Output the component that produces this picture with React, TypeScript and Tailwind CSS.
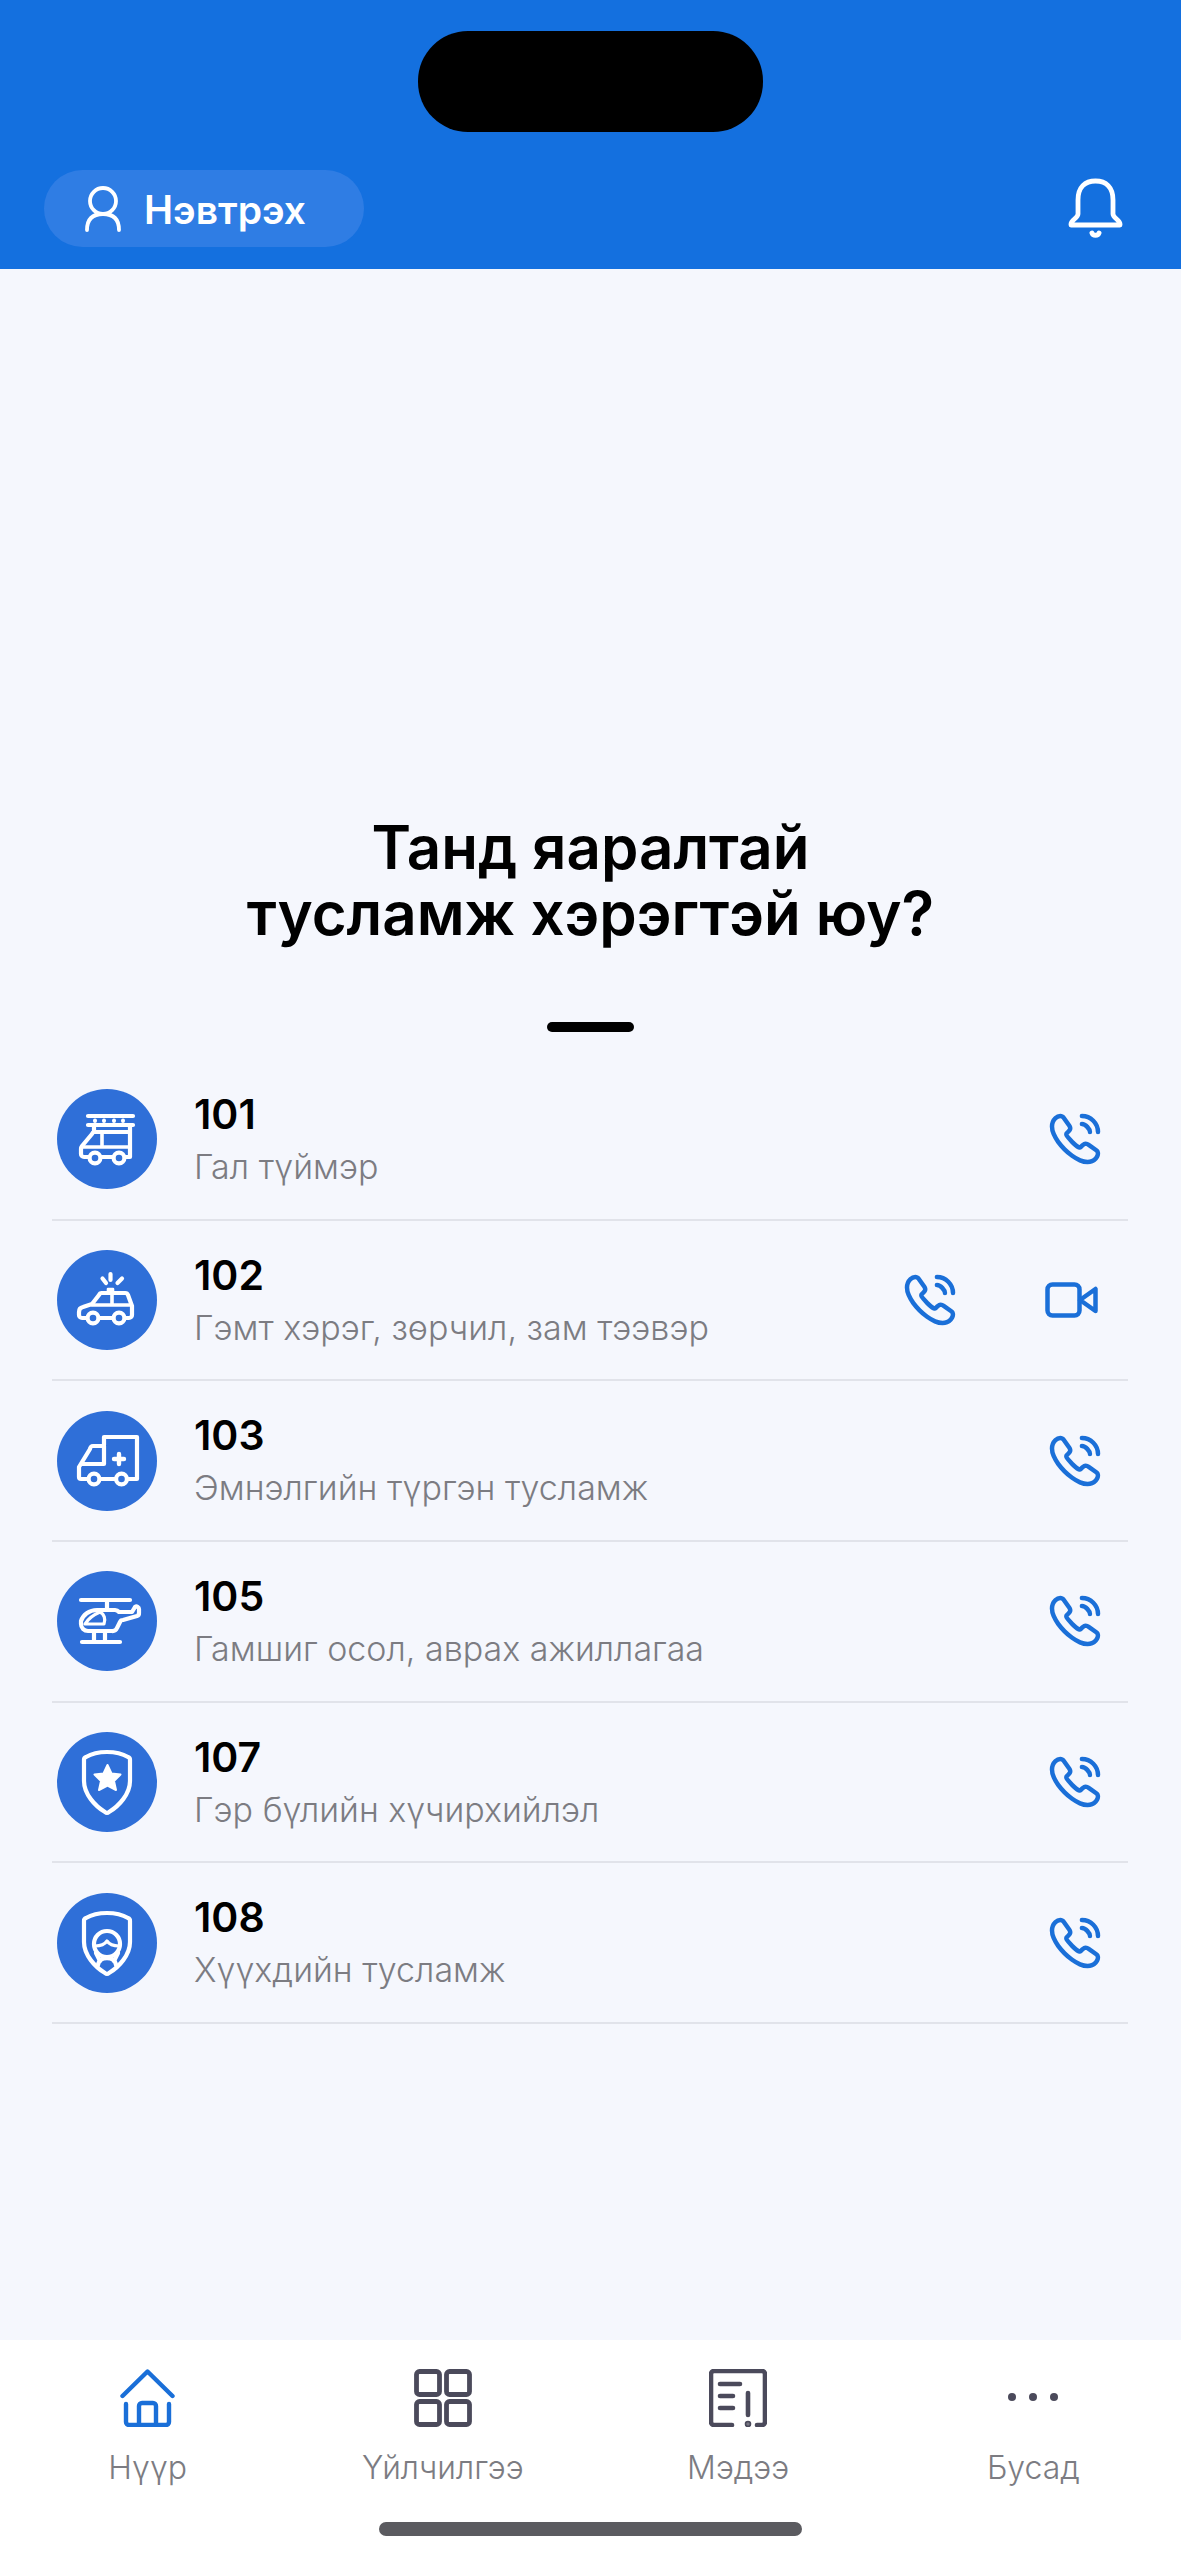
import React from 'react';

const PhoneIcon = () => (
  <svg width="46" height="46" viewBox="2 2 20 20" fill="none" stroke="#1a6fd8" strokeWidth="1.95" strokeLinecap="round" strokeLinejoin="round" overflow="visible">
    <path d="M21.97 18.33c0 .36-.08.73-.25 1.09-.17.36-.39.7-.68 1.02-.49.54-1.03.93-1.64 1.18-.6.25-1.25.38-1.95.38-1.02 0-2.11-.24-3.26-.73s-2.3-1.15-3.44-1.98a28.75 28.75 0 0 1-3.28-2.8 28.414 28.414 0 0 1-2.79-3.27c-.82-1.14-1.48-2.28-1.96-3.41C2.24 8.67 2 7.58 2 6.54c0-.68.12-1.33.36-1.93.24-.61.62-1.17 1.15-1.67C4.15 2.31 4.85 2 5.59 2c.28 0 .56.06.81.18.26.12.49.3.67.56l2.32 3.27c.18.25.31.48.4.7.09.21.14.42.14.61 0 .24-.07.48-.21.71-.13.23-.32.47-.56.71l-.76.79c-.11.11-.16.24-.16.4 0 .08.01.15.03.23.03.08.06.14.08.2.18.33.49.76.93 1.28.45.52.93 1.05 1.45 1.58.54.53 1.06 1.02 1.59 1.47.52.44.95.74 1.29.92.05.02.11.05.18.08.08.03.16.04.25.04.17 0 .3-.06.41-.17l.76-.75c.25-.25.49-.44.72-.56.23-.14.46-.21.71-.21.19 0 .39.04.61.13.22.09.45.22.7.39l3.31 2.35c.26.18.44.39.55.64.1.25.16.5.16.78Z" />
    <path d="M18.5 9c0-.6-.47-1.52-1.17-2.27-.64-.69-1.49-1.23-2.33-1.23" />
    <path d="M22 9c0-3.87-3.13-7-7-7" />
  </svg>
);

const VideoIcon = () => (
  <svg width="53" height="36" viewBox="0 0 53 36" fill="none" stroke="#1a6fd8" strokeWidth="4.5" strokeLinecap="round" strokeLinejoin="round">
    <rect x="2.5" y="2.5" width="32" height="31" rx="5" />
    <path d="M35 18 L50.5 7 V29 Z" />
  </svg>
);

// all service icons share a 100x100 box, same as the round badge
const TruckIcon = () => (
  <svg viewBox="0 0 100 100" className="w-full h-full" fill="none" stroke="#fff" strokeWidth="4.2" strokeLinecap="round" strokeLinejoin="round">
    <path d="M31 27 H76 M31 36 H76" />
    <path d="M38 31.5 V32 M47 31.5 V32 M57 31.5 V32 M66 31.5 V32" strokeWidth="4" />
    <path d="M37 37 V43 M73 37 V68 H68" />
    <path d="M32 68 H27 a3 3 0 0 1-3-3 V60 a5 5 0 0 1 1-3 L35 45 a3 3 0 0 1 2-2 H73" />
    <path d="M44 68 H56" />
    <path d="M25 58 H73 M45 44 V56" strokeWidth="3.6" />
    <circle cx="38" cy="69" r="5.4" />
    <circle cx="62" cy="69" r="5.4" />
  </svg>
);

const PoliceIcon = () => (
  <svg viewBox="0 0 100 100" className="w-full h-full" fill="none" stroke="#fff" strokeWidth="4.2" strokeLinecap="round" strokeLinejoin="round">
    <path d="M53.5 24 V30 M45.5 28.5 L49 33 M65 28.5 L60.5 33" />
    <path d="M51 42 V39 h5 V42 Z" fill="#fff" strokeWidth="2.6" />
    <path d="M30 68 H25 a3 3 0 0 1-3-3 V62 a5 5 0 0 1 4-5 L35 54 L42 45 a3 3 0 0 1 3-2 H68 a3 3 0 0 1 3 2 L75 56 V65 a3 3 0 0 1-3 3 H68" />
    <path d="M43 68 H55" />
    <path d="M35 55 H74 M55 44 V54" strokeWidth="3.6" />
    <circle cx="36" cy="68" r="5.4" />
    <circle cx="62" cy="68" r="5.4" />
  </svg>
);

const AmbulanceIcon = () => (
  <svg viewBox="0 0 100 100" className="w-full h-full" fill="none" stroke="#fff" strokeWidth="4.2" strokeLinecap="round" strokeLinejoin="round">
    <path d="M47 34 V26 H80 V68 H71" />
    <path d="M31 68 H24 a2 2 0 0 1-2-2 V56 L33 38 a3 3 0 0 1 3-3 H47 V53 H25" />
    <path d="M44 68 H58" />
    <circle cx="37" cy="68" r="5.4" />
    <circle cx="64.5" cy="68" r="5.4" />
    <path d="M62 43 V53 M57 48 H67" strokeWidth="4.4" />
  </svg>
);

const HeliIcon = () => (
  <svg viewBox="0 0 100 100" className="w-full h-full" fill="none" stroke="#fff" strokeWidth="4.2" strokeLinecap="round" strokeLinejoin="round">
    <path d="M24 29 H73 M50 29 V38" />
    <path d="M40 39 H58 a6 6 0 0 1 4 2 H75 L78 36 a2.5 2.5 0 0 1 4 2 V42 a3 3 0 0 1-2 3 L66 49 a3 3 0 0 0-3 2 L60 57 a5 5 0 0 1-5 3 H31 a7 7 0 0 1-7-7 V50 C26 44 32 39 40 39 Z" />
    <path d="M43 41 C36 44 31 48 28 53 H47 C49 48 47 43 43 41 Z" strokeWidth="3.2" />
    <path d="M25 71 H63 M37 61 V71 M48 61 V71" />
  </svg>
);

const ShieldStarIcon = () => (
  <svg viewBox="0 0 100 100" className="w-full h-full" fill="none" stroke="#fff" strokeWidth="4.2" strokeLinecap="round" strokeLinejoin="round">
    <path d="M50 20 C58 20 66 22 71 25 a3 3 0 0 1 2 3 V49 C73 62 62 74 52 80 a3 3 0 0 1-4 0 C38 74 27 62 27 49 V28 a3 3 0 0 1 2-3 C34 22 42 20 50 20 Z" />
    <path d="M50.5 33 L54.5 41.5 L63.5 42.5 L57 49 L59 58 L50.5 53.5 L42 58 L44 49 L37.5 42.5 L46.5 41.5 Z" fill="#fff" stroke="#fff" strokeWidth="2" />
  </svg>
);

const ShieldChildIcon = () => (
  <svg viewBox="0 0 100 100" className="w-full h-full" fill="none" stroke="#fff" strokeWidth="4.2" strokeLinecap="round" strokeLinejoin="round">
    <path d="M50 20 C58 20 66 22 71 25 a3 3 0 0 1 2 3 V49 C73 62 62 74 52 80 a3 3 0 0 1-4 0 C38 74 27 62 27 49 V28 a3 3 0 0 1 2-3 C34 22 42 20 50 20 Z" />
    <circle cx="50" cy="51" r="13" />
    <path d="M38 53 C44 53 48 51 50 48 C52 51 56 53 62 53" strokeWidth="3.2" />
    <path d="M39 60 L43 68 M61 60 L57 68" />
    <path d="M41 72 C42 63 58 63 59 72" />
  </svg>
);

const services = [
  { code: '101', label: 'Гал түймэр', icon: <TruckIcon /> },
  { code: '102', label: 'Гэмт хэрэг, зөрчил, зам тээвэр', icon: <PoliceIcon />, video: true },
  { code: '103', label: 'Эмнэлгийн түргэн тусламж', icon: <AmbulanceIcon /> },
  { code: '105', label: 'Гамшиг осол, аврах ажиллагаа', icon: <HeliIcon /> },
  { code: '107', label: 'Гэр бүлийн хүчирхийлэл', icon: <ShieldStarIcon /> },
  { code: '108', label: 'Хүүхдийн тусламж', icon: <ShieldChildIcon /> },
];

const navItems = [
  {
    label: 'Нүүр',
    icon: (
      <svg width="55" height="58" viewBox="0 0 55 58" fill="none" stroke="#1a6fd8" strokeWidth="4.4" strokeLinecap="round" strokeLinejoin="round">
        <path d="M2.5 27 L27.5 2.5 L52.5 27" />
        <path d="M6 35 V53 a3 3 0 0 0 3 3 H46 a3 3 0 0 0 3-3 V35" />
        <path d="M19 55 V37 a3 3 0 0 1 3-3 h11 a3 3 0 0 1 3 3 V55" />
      </svg>
    ),
  },
  {
    label: 'Үйлчилгээ',
    icon: (
      <svg width="58" height="58" viewBox="0 0 58 58" fill="none" stroke="#4b4a5b" strokeWidth="4.8">
        <rect x="2.5" y="2.5" width="23" height="23" rx="3" />
        <rect x="32.5" y="2.5" width="23" height="23" rx="3" />
        <rect x="2.5" y="32.5" width="23" height="23" rx="3" />
        <rect x="32.5" y="32.5" width="23" height="23" rx="3" />
      </svg>
    ),
  },
  {
    label: 'Мэдээ',
    icon: (
      <svg width="58" height="58" viewBox="0 0 58 58" fill="none" stroke="#4b4a5b" strokeWidth="4.6" strokeLinecap="round" strokeLinejoin="round">
        <path d="M23 56 H5 a3 3 0 0 1-3-3 V5 a3 3 0 0 1 3-3 H53 a3 3 0 0 1 3 3 V53 a3 3 0 0 1-3 3 H48" />
        <path d="M11 15 H31 M11 27 H24 M11 39 H24" />
        <path d="M39 24 V46" />
        <circle cx="39" cy="55" r="1" fill="#4b4a5b" />
      </svg>
    ),
  },
  {
    label: 'Бусад',
    icon: (
      <svg width="58" height="58" viewBox="0 0 58 58" fill="#4b4a5b">
        <circle cx="8" cy="28" r="4" />
        <circle cx="29" cy="28" r="4" />
        <circle cx="50" cy="28" r="4" />
      </svg>
    ),
  },
];

const App: React.FC = () => {
  return (
    <div className="flex flex-col h-[2560px] w-[1181px] overflow-hidden bg-[#f5f7fd] font-['Inter',sans-serif]">
      <header className="h-[269px] shrink-0 bg-[#1470df] flex flex-col">
        <div className="mt-[31px] mx-auto w-[345px] h-[101px] rounded-[50px] bg-black" />
        <div className="mt-[38px] pl-[44px] pr-[58px] flex items-start justify-between">
          <button className="w-[320px] h-[77px] rounded-full bg-[#2f7de4] flex items-center pl-[41px] gap-[23px] text-white text-[39px] font-semibold">
            <svg width="36" height="46" viewBox="0 0 36 46" fill="none" stroke="#fff" strokeWidth="3.8" strokeLinecap="round">
              <circle cx="18" cy="15" r="13" />
              <path d="M2 44 C2 33 8 28 18 28 C28 28 34 33 34 44" />
            </svg>
            <span className="mt-[3px]">Нэвтрэх</span>
          </button>
          <svg className="mt-[8px]" width="55" height="60" viewBox="0 0 55 60" fill="none" stroke="#fff" strokeWidth="4.8" strokeLinecap="round" strokeLinejoin="round">
            <path d="M10 36 V22 C10 9 17 3 27.5 3 C38 3 45 9 45 22 V36 C45 40 52 42 52 46 V47 H3 V46 C3 42 10 40 10 36 Z" />
            <path d="M24 55 C25 58 30 58 31 55" strokeWidth="5" />
          </svg>
        </div>
      </header>

      <main className="flex-1 flex flex-col">
        <h1 className="mt-[545px] text-center text-[60px] leading-[66px] font-semibold text-black">
          Танд яаралтай
          <br />
          тусламж хэрэгтэй юу?
        </h1>
        <div className="mt-[76px] mx-auto w-[87px] h-[10px] rounded-full bg-black" />
        <ul className="mt-[28px] ml-[52px] mr-[53px]">
          {services.map(s => (
            <li key={s.code} className="h-[160.7px] flex items-center pl-[5px] pr-[30px] border-b-2 border-[#e1e3ea]">
              <div className="w-[100px] h-[100px] shrink-0 rounded-full bg-[#2f6fd8]">{s.icon}</div>
              <div className="ml-[37px] flex-1 min-w-0">
                <div className="mt-[3px] text-[41px] leading-[48px] font-semibold text-black">{s.code}</div>
                <div className="mt-[4px] text-[34px] leading-[50px] font-light text-[#7c7c82]">{s.label}</div>
              </div>
              <div className="flex items-center gap-[92px]">
                <PhoneIcon />
                {s.video && <VideoIcon />}
              </div>
            </li>
          ))}
        </ul>
      </main>

      <nav className="h-[220px] shrink-0 bg-white flex flex-col">
        <div className="grid grid-cols-4 pt-[29px]">
          {navItems.map(item => (
            <div key={item.label} className="flex flex-col items-center">
              <div className="h-[58px] flex items-center justify-center">{item.icon}</div>
              <span className="mt-[21px] text-[32px] leading-[40px] font-light text-[#7c7c82]">{item.label}</span>
            </div>
          ))}
        </div>
        <div className="mt-[34px] mx-auto w-[423px] h-[14px] rounded-full bg-[#5b5b60]" />
      </nav>
    </div>
  );
};

export default App;
